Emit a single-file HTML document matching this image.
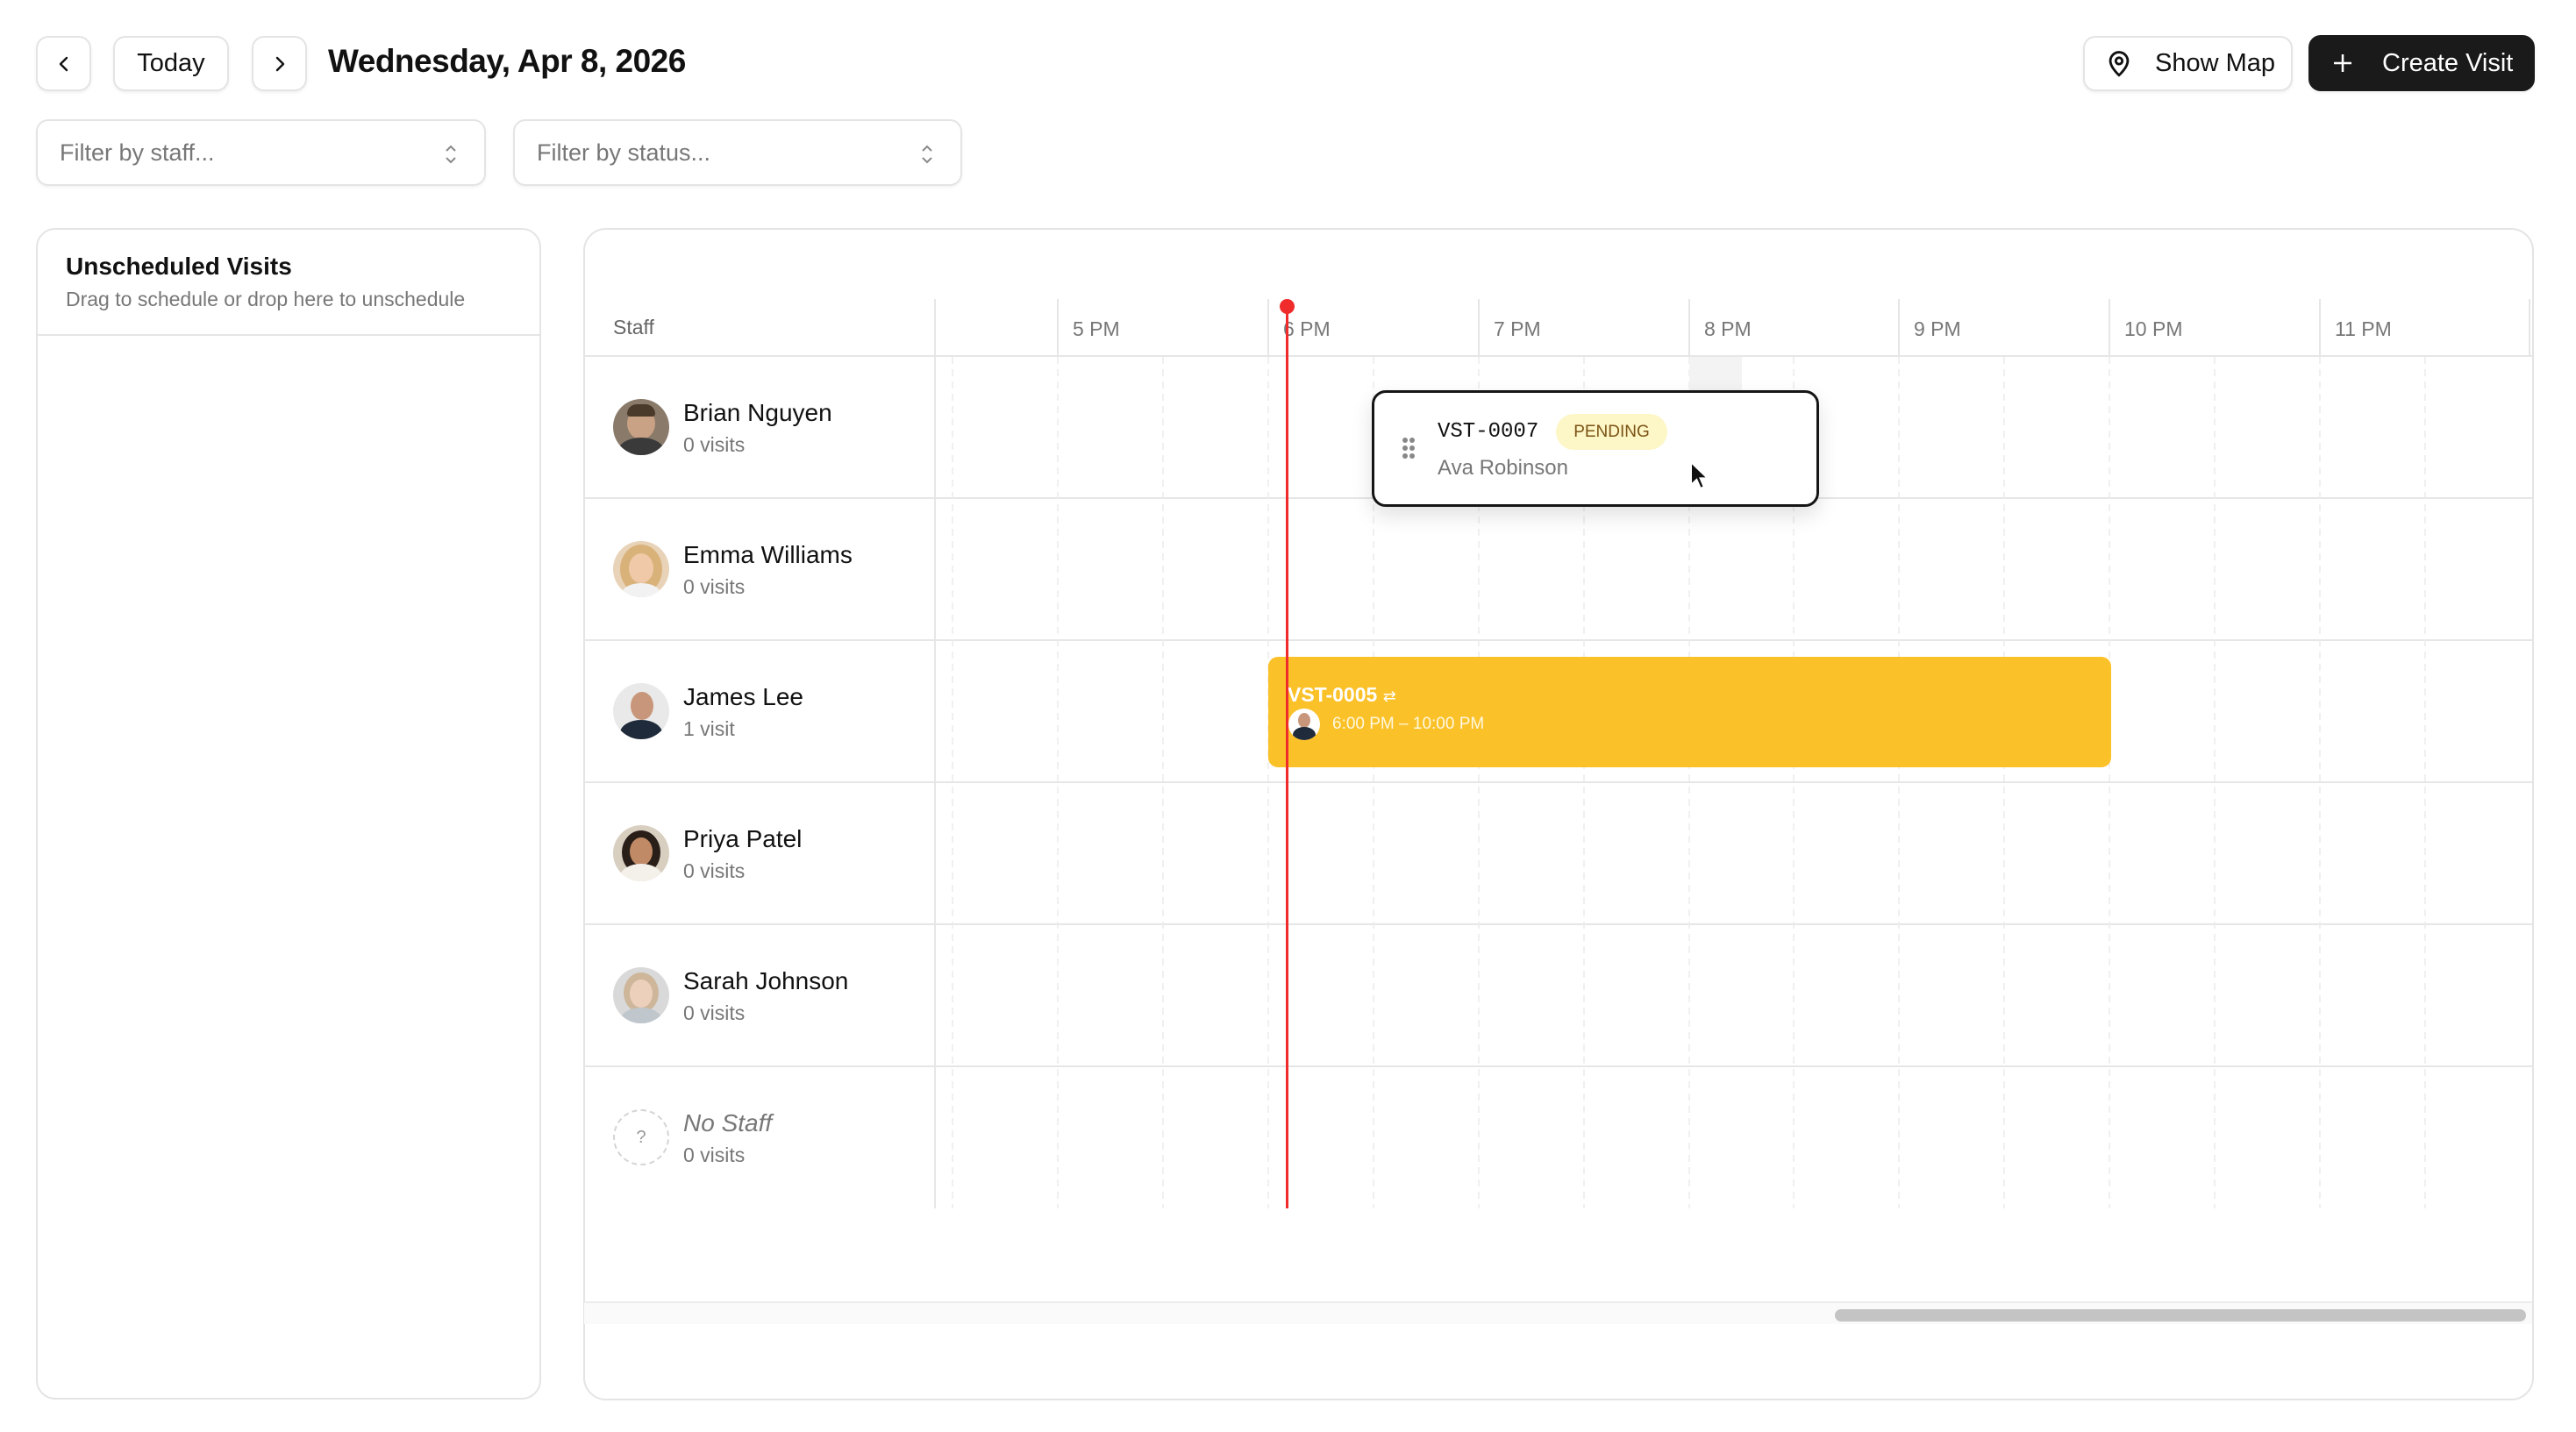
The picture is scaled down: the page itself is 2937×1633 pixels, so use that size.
<!DOCTYPE html>
<html><head><meta charset="utf-8"><style>
*{box-sizing:border-box;margin:0;padding:0}
body{width:2937px;height:1633px;background:#fff;font-family:"Liberation Sans",sans-serif;color:#111;position:relative;overflow:hidden}
.a{position:absolute}
.btn{position:absolute;border:2px solid #e4e4e4;border-radius:14px;background:#fff;box-shadow:0 2px 3px rgba(0,0,0,.06);display:flex;align-items:center;justify-content:center;font-size:29px;color:#111}
.sel{position:absolute;border:2px solid #e4e4e4;border-radius:14px;background:#fff;box-shadow:0 2px 3px rgba(0,0,0,.05);font-size:27px;color:#777;display:flex;align-items:center;padding-left:25px}
.hl{position:absolute;top:362px;font-size:23px;color:#777}
.name{position:absolute;left:779px;font-size:28px;color:#111}
.vis{position:absolute;left:779px;font-size:23px;color:#777}
.av{position:absolute;left:699px;width:64px;height:64px;border-radius:50%;overflow:hidden}
</style></head><body>

<div class="btn" style="left:41px;top:41px;width:63px;height:63px"><svg width="24" height="24" viewBox="0 0 24 24"><path d="M15 5l-7 7 7 7" fill="none" stroke="#111" stroke-width="2.4" stroke-linecap="round" stroke-linejoin="round"/></svg></div>
<div class="btn" style="left:129px;top:41px;width:132px;height:63px">Today</div>
<div class="btn" style="left:287px;top:41px;width:63px;height:63px"><svg width="24" height="24" viewBox="0 0 24 24"><path d="M9 5l7 7-7 7" fill="none" stroke="#111" stroke-width="2.4" stroke-linecap="round" stroke-linejoin="round"/></svg></div>
<div class="a" style="left:374px;top:49px;font-size:37px;font-weight:bold;letter-spacing:-0.5px">Wednesday, Apr 8, 2026</div>

<div class="btn" style="left:2375px;top:41px;width:239px;height:63px;justify-content:flex-start;padding-left:22px"><svg width="34" height="34" viewBox="0 0 24 24" fill="none" stroke="#111" stroke-width="2"><path d="M12 21s-7-6.2-7-11.5a7 7 0 0 1 14 0C19 14.8 12 21 12 21z"/><circle cx="12" cy="9.5" r="2.6"/></svg><span style="margin-left:24px">Show Map</span></div>
<div class="btn" style="left:2632px;top:40px;width:258px;height:64px;background:#1a1a1a;border-color:#1a1a1a;color:#fff;justify-content:flex-start;padding-left:22px"><svg width="30" height="30" viewBox="0 0 24 24"><path d="M12 4v16M4 12h16" stroke="#fff" stroke-width="2"/></svg><span style="margin-left:30px">Create Visit</span></div>

<div class="sel" style="left:41px;top:136px;width:513px;height:76px">Filter by staff...<svg class="a" style="right:28px;top:24px" width="20" height="28" viewBox="0 0 20 28"><path d="M5 10l5-5 5 5M5 18l5 5 5-5" fill="none" stroke="#888" stroke-width="2"/></svg></div>
<div class="sel" style="left:585px;top:136px;width:512px;height:76px">Filter by status...<svg class="a" style="right:28px;top:24px" width="20" height="28" viewBox="0 0 20 28"><path d="M5 10l5-5 5 5M5 18l5 5 5-5" fill="none" stroke="#888" stroke-width="2"/></svg></div>

<!-- left panel -->
<div class="a" style="left:41px;top:260px;width:576px;height:1336px;border:2px solid #e4e4e4;border-radius:22px"></div>
<div class="a" style="left:43px;top:381px;width:572px;height:2px;background:#e6e6e6"></div>
<div class="a" style="left:75px;top:288px;font-size:28px;font-weight:bold">Unscheduled Visits</div>
<div class="a" style="left:75px;top:328px;font-size:23px;color:#777">Drag to schedule or drop here to unschedule</div>

<!-- main panel -->
<div class="a" style="left:665px;top:260px;width:2224px;height:1337px;border:2px solid #e4e4e4;border-radius:26px"></div>
<svg class="a" style="left:0;top:0" width="2937" height="1633">
<g stroke="#e6e6e6" stroke-width="2">
<line x1="666" y1="406" x2="2887" y2="406"/>
<line x1="666" y1="568" x2="2887" y2="568"/>
<line x1="666" y1="730" x2="2887" y2="730"/>
<line x1="666" y1="892" x2="2887" y2="892"/>
<line x1="666" y1="1054" x2="2887" y2="1054"/>
<line x1="666" y1="1216" x2="2887" y2="1216"/>
<line x1="1066" y1="341" x2="1066" y2="1378"/>
<line x1="1206" y1="341" x2="1206" y2="406"/><line x1="1446" y1="341" x2="1446" y2="406"/><line x1="1686" y1="341" x2="1686" y2="406"/><line x1="1926" y1="341" x2="1926" y2="406"/><line x1="2165" y1="341" x2="2165" y2="406"/><line x1="2405" y1="341" x2="2405" y2="406"/><line x1="2645" y1="341" x2="2645" y2="406"/><line x1="2884" y1="341" x2="2884" y2="406"/>
</g>
<g stroke="#ececec" stroke-width="1.5" stroke-dasharray="8 6">
<line x1="1086" y1="407" x2="1086" y2="1378"/><line x1="1206" y1="407" x2="1206" y2="1378"/><line x1="1326" y1="407" x2="1326" y2="1378"/><line x1="1446" y1="407" x2="1446" y2="1378"/><line x1="1566" y1="407" x2="1566" y2="1378"/><line x1="1686" y1="407" x2="1686" y2="1378"/><line x1="1806" y1="407" x2="1806" y2="1378"/><line x1="1926" y1="407" x2="1926" y2="1378"/><line x1="2045" y1="407" x2="2045" y2="1378"/><line x1="2165" y1="407" x2="2165" y2="1378"/><line x1="2285" y1="407" x2="2285" y2="1378"/><line x1="2405" y1="407" x2="2405" y2="1378"/><line x1="2525" y1="407" x2="2525" y2="1378"/><line x1="2645" y1="407" x2="2645" y2="1378"/><line x1="2765" y1="407" x2="2765" y2="1378"/>
</g>
<rect x="1926" y="407" width="60" height="40" fill="#f3f3f4"/>
<line x1="666" y1="1485" x2="2887" y2="1485" stroke="#ececec" stroke-width="2"/>
<rect x="666" y="1486" width="2221" height="24" fill="#fafafa"/>
<rect x="2092" y="1493" width="788" height="14" rx="7" fill="#c4c4c4"/>
</svg>

<div class="a" style="left:699px;top:360px;font-size:23px;color:#666">Staff</div>
<div class="hl" style="left:1223px">5 PM</div>
<div class="hl" style="left:1463px">6 PM</div>
<div class="hl" style="left:1703px">7 PM</div>
<div class="hl" style="left:1943px">8 PM</div>
<div class="hl" style="left:2182px">9 PM</div>
<div class="hl" style="left:2422px">10 PM</div>
<div class="hl" style="left:2662px">11 PM</div>

<!-- staff rows -->
<div class="av" style="top:455px;background:#8a7a6a"><div class="a" style="left:16px;top:10px;width:32px;height:36px;border-radius:50%;background:#c9a184"></div><div class="a" style="left:16px;top:6px;width:32px;height:14px;border-radius:14px 14px 4px 4px;background:#4a3a2a"></div><div class="a" style="left:6px;top:44px;width:52px;height:30px;border-radius:50%;background:#3a3a3a"></div></div>
<div class="name" style="top:455px">Brian Nguyen</div><div class="vis" style="top:494px">0 visits</div>

<div class="av" style="top:617px;background:#e8d3b8"><div class="a" style="left:8px;top:4px;width:48px;height:56px;border-radius:50%;background:#d9b27a"></div><div class="a" style="left:18px;top:14px;width:28px;height:34px;border-radius:50%;background:#f0c9a8"></div><div class="a" style="left:10px;top:48px;width:44px;height:24px;border-radius:50%;background:#f2f2f2"></div></div>
<div class="name" style="top:617px">Emma Williams</div><div class="vis" style="top:656px">0 visits</div>

<div class="av" style="top:779px;background:#e9e9e9"><div class="a" style="left:20px;top:10px;width:26px;height:32px;border-radius:50%;background:#c8967a"></div><div class="a" style="left:8px;top:42px;width:48px;height:30px;border-radius:50%;background:#1f2a3a"></div></div>
<div class="name" style="top:779px">James Lee</div><div class="vis" style="top:818px">1 visit</div>

<div class="av" style="top:941px;background:#d8cfc0"><div class="a" style="left:10px;top:6px;width:44px;height:50px;border-radius:50%;background:#2a1e18"></div><div class="a" style="left:19px;top:14px;width:26px;height:32px;border-radius:50%;background:#c08a66"></div><div class="a" style="left:8px;top:44px;width:48px;height:30px;border-radius:50%;background:#f4f0ea"></div></div>
<div class="name" style="top:941px">Priya Patel</div><div class="vis" style="top:980px">0 visits</div>

<div class="av" style="top:1103px;background:#d9d9d9"><div class="a" style="left:12px;top:6px;width:40px;height:46px;border-radius:50%;background:#cdb69a"></div><div class="a" style="left:19px;top:14px;width:26px;height:32px;border-radius:50%;background:#ecd0bc"></div><div class="a" style="left:8px;top:46px;width:48px;height:30px;border-radius:50%;background:#bfc6cc"></div></div>
<div class="name" style="top:1103px">Sarah Johnson</div><div class="vis" style="top:1142px">0 visits</div>

<div class="a" style="left:699px;top:1265px;width:64px;height:64px;border-radius:50%;border:2px dashed #d4d4d4;display:flex;align-items:center;justify-content:center;font-size:20px;color:#999">?</div>
<div class="name" style="top:1265px;font-style:italic;color:#777">No Staff</div><div class="vis" style="top:1304px">0 visits</div>

<!-- yellow visit -->
<div class="a" style="left:1446px;top:749px;width:961px;height:126px;background:#fbc129;border-radius:11px"></div>
<div class="a" style="left:1468px;top:779px;font-size:23px;font-weight:bold;color:#fff">VST-0005 <span style="font-size:18px;font-weight:normal">⇄</span></div>
<div class="a" style="left:1469px;top:808px;width:36px;height:36px;border-radius:50%;background:#fff;overflow:hidden"><div class="a" style="left:11px;top:5px;width:14px;height:17px;border-radius:50%;background:#c8967a"></div><div class="a" style="left:5px;top:21px;width:26px;height:18px;border-radius:50%;background:#1f2a3a"></div></div>
<div class="a" style="left:1519px;top:815px;font-size:19px;color:#fff8e0">6:00 PM – 10:00 PM</div>

<!-- red now line -->
<div class="a" style="left:1466px;top:350px;width:3px;height:1028px;background:#ef2b2b"></div>
<div class="a" style="left:1459px;top:341px;width:17px;height:17px;border-radius:50%;background:#ef2b2b"></div>

<!-- dragging card -->
<div class="a" style="left:1564px;top:445px;width:510px;height:133px;border:3px solid #151515;border-radius:16px;background:#fff;box-shadow:0 10px 24px rgba(0,0,0,.12)"></div>
<svg class="a" style="left:1598px;top:498px" width="16" height="26"><g fill="#888"><circle cx="4" cy="4" r="3"/><circle cx="12" cy="4" r="3"/><circle cx="4" cy="13" r="3"/><circle cx="12" cy="13" r="3"/><circle cx="4" cy="22" r="3"/><circle cx="12" cy="22" r="3"/></g></svg>
<div class="a" style="left:1639px;top:479px;font-family:'Liberation Mono',monospace;font-size:24px;color:#111">VST-0007</div>
<div class="a" style="left:1774px;top:472px;width:127px;height:41px;border-radius:21px;background:#fdf6c6;color:#7a5314;font-size:19px;display:flex;align-items:center;justify-content:center">PENDING</div>
<div class="a" style="left:1639px;top:520px;font-size:24px;color:#777">Ava Robinson</div>
<svg class="a" style="left:1926px;top:525px" width="24" height="34" viewBox="0 0 12 17"><path d="M1 1v13l3.2-3 2.2 5 2-.9-2.1-4.9H10.5z" fill="#111" stroke="#fff" stroke-width="1"/></svg>
</body></html>
